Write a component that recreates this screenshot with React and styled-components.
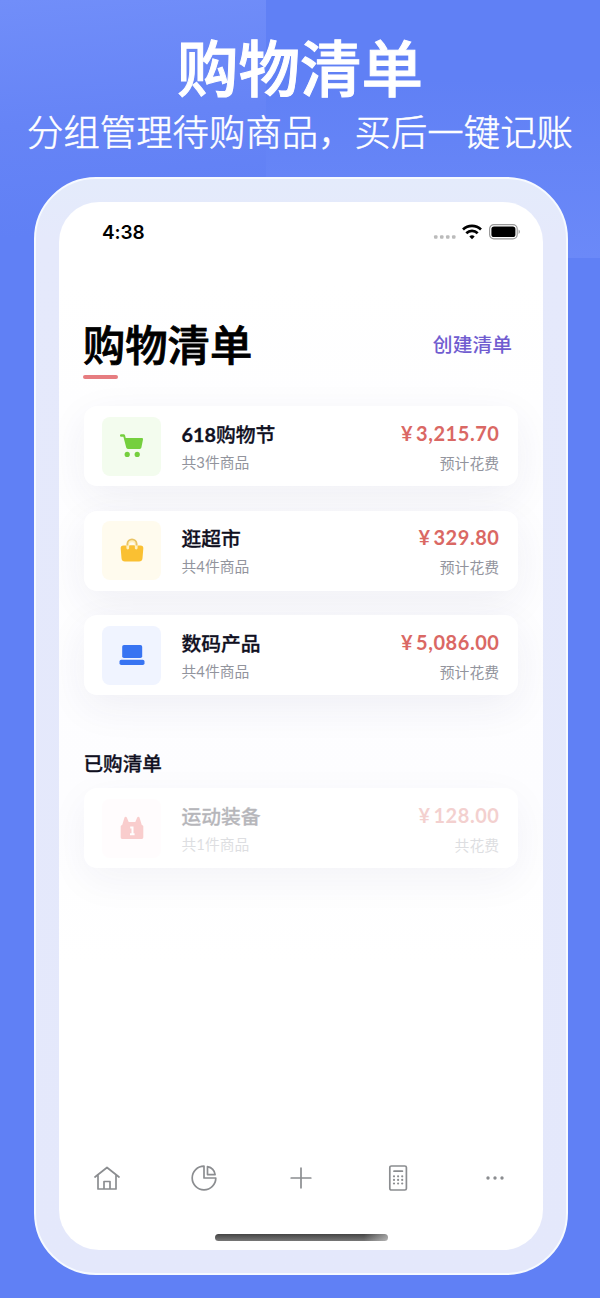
import React from 'react';
import styled, { createGlobalStyle } from 'styled-components';

const GlobalStyle = createGlobalStyle`
  *, *::before, *::after { box-sizing: border-box; }
  body {
    margin: 0;
    background: #6080f5;
    font-family: "Noto Sans CJK SC", "Noto Sans", sans-serif;
  }
`;

const Poster = styled.main`
  width: 600px;
  height: 1298px;
  overflow: hidden;
  display: flex;
  flex-direction: column;
  align-items: center;
  color: #fff;
  background:
    linear-gradient(175deg, #718ef9 0%, #6684f6 45%, rgba(96, 128, 245, 0) 85%) 0 0 / 266px 258px no-repeat,
    linear-gradient(180deg, rgba(112, 141, 249, 0) 30%, #6b89f8 100%) 100% 0 / 334px 258px no-repeat,
    #6080f5;
`;

const Headline = styled.h1`
  margin: 33px 0 0;
  height: 66px;
  line-height: 66px;
  font-size: 61.5px;
  font-weight: 500;
  -webkit-text-stroke: 1px #fff;
  white-space: nowrap;
`;

const Tagline = styled.p`
  margin: 6px 0 0;
  height: 50px;
  line-height: 50px;
  font-size: 36.4px;
  font-weight: 300;
  -webkit-text-stroke: 0.5px #fff;
  white-space: nowrap;
`;

const Phone = styled.section`
  width: 534px;
  height: 1098px;
  margin: 22px 0 0 2px;
  padding: 23px;
  flex: none;
  border: 2px solid #f6faff;
  border-radius: 62px;
  background: linear-gradient(180deg, #e4ebfb 0, #e5e9fb 60px, #e4e8fb 100%);
`;

const Screen = styled.div`
  height: 100%;
  overflow: hidden;
  display: flex;
  flex-direction: column;
  border-radius: 40px;
  background: linear-gradient(180deg, #fff 0, #fff 80px, #fefeff 200px, #fdfdff 600px, #fff 760px);
  color: #10101f;
`;

const StatusBar = styled.header`
  flex: none;
  height: 60px;
  padding: 0 22px 0 43px;
  display: flex;
  align-items: center;
  justify-content: space-between;
`;

const Clock = styled.time`
  margin-top: 2px;
  font: 600 19px/24px Inter, sans-serif;
  letter-spacing: -0.1px;
  color: #000;
`;

const StatusIcons = styled.div`
  display: flex;
  align-items: center;
  svg { display: block; }
`;

const TitleRow = styled.div`
  flex: none;
  margin: 56px 31px 0 24px;
  height: 50px;
  display: flex;
  align-items: center;
  justify-content: space-between;
`;

const PageTitle = styled.h2`
  margin: 0;
  font-size: 42.3px;
  line-height: 50px;
  font-weight: 500;
  -webkit-text-stroke: 0.8px #000;
  color: #000;
`;

const CreateLink = styled.button`
  margin-top: 2px;
  padding: 0;
  border: 0;
  background: none;
  font: inherit;
  font-size: 19.8px;
  line-height: 28px;
  font-weight: 500;
  color: #705cd0;
`;

const Underline = styled.div`
  flex: none;
  width: 35px;
  height: 4px;
  margin: 7px 0 0 24px;
  border-radius: 2px;
  background: #e67c80;
`;

const CardList = styled.div`
  flex: none;
  display: flex;
  flex-direction: column;
  gap: 24.5px;
  margin: ${p => p.$top}px 25px 0;
`;

const Card = styled.article`
  height: 80px;
  padding: 0 19px 0 18px;
  display: flex;
  align-items: center;
  border-radius: 13px;
  background: #fff;
  box-shadow: 0 12px 40px rgba(40, 40, 100, ${p => (p.$faded ? 0.05 : 0.065)});
`;

const IconTile = styled.div`
  width: 59px;
  height: 59px;
  margin-right: 20.5px;
  opacity: ${p => (p.$faded ? 0.3 : 1)};
  display: grid;
  place-items: center;
  border-radius: 8px;
  background: ${p => p.$bg};
`;

const Info = styled.div`
  flex: 1;
  display: flex;
  flex-direction: column;
  align-items: ${p => (p.$end ? 'flex-end' : 'flex-start')};
  opacity: ${p => (p.$faded ? 0.3 : 1)};
`;

const ItemName = styled.h3`
  margin: 0;
  font: 500 19.8px/28px "Noto Sans CJK SC", sans-serif;
  -webkit-text-stroke: 0.3px #10101f;
  color: #10101f;
`;

const Digits = styled.span`
  font-family: Lato, sans-serif;
  font-weight: 700;
`;

const Note = styled.span`
  margin-top: ${p => p.$gap}px;
  font: 400 14.8px/22px Lato, "Noto Sans CJK SC", sans-serif;
  color: #92949d;
`;

const Price = styled.strong`
  font: 700 20px/28px Lato, "Noto Sans CJK SC", sans-serif;
  letter-spacing: 0.55px;
  word-spacing: -2.6px;
  margin-right: -0.5px;
  color: #da6864;
`;

const SectionTitle = styled.h3`
  flex: none;
  margin: 54px 0 0 24.5px;
  font-size: 19.6px;
  line-height: 28px;
  font-weight: 500;
  -webkit-text-stroke: 0.3px #10101f;
`;

const TabBar = styled.nav`
  flex: none;
  margin-top: auto;
  height: 40px;
  display: grid;
  grid-template-columns: repeat(5, 1fr);
  place-items: center;
  svg { display: block; }
`;

const HomeIndicator = styled.div`
  flex: none;
  width: 173px;
  height: 7px;
  margin: 36px auto 9px 155.5px;
  border-radius: 4px;
  background:
    linear-gradient(90deg, rgba(255, 255, 255, 0) 86%, rgba(255, 255, 255, 0.45) 100%),
    linear-gradient(180deg, #444 0%, #777 100%);
`;

const CartIcon = () => (
  <svg width="26" height="26" viewBox="0 0 26 26" fill="#75cf3e">
    <path d="M2.2 1.200h2.100c.9 0 1.600.5 1.800 1.400l.6 2.400h16.100c.9 0 1.400.7 1.200 1.500l-1.600 8c-.2.9-.8 1.400-1.700 1.400H9c-.9 0-1.600-.5-1.800-1.400L4.400 3.700H2.200a1.250 1.250 0 0 1 0-2.500z" />
    <circle cx="8.200" cy="21.400" r="2.600" />
    <circle cx="18.200" cy="21.400" r="2.600" />
  </svg>
);

const BagIcon = () => (
  <svg width="26" height="26" viewBox="0 0 26 26">
    <path d="M4.500 7.500h17c2 0 3 1.200 2.800 3l-.8 9.700c-.2 2.200-1.400 3.300-3.400 3.300H5.900c-2 0-3.200-1.100-3.400-3.300l-.8-9.700c-.2-1.800.8-3 2.800-3z" fill="#fac032" />
    <path d="M8.800 10V7a4.200 4.200 0 0 1 8.400 0v3" fill="none" stroke="#fff0bd" strokeWidth="2.800" strokeLinecap="round" />
    <path d="M8.400 7.500V6a4.600 4.600 0 0 1 9.200 0v1.500" fill="none" stroke="#e9c364" strokeWidth="1.800" />
    <path d="M10.600 7.500h4.800V10h-4.800z" fill="#fac032" />
  </svg>
);

const LaptopIcon = () => (
  <svg width="26" height="26" viewBox="0 0 26 26" fill="#3874f2">
    <rect x="3.200" y="3" width="20" height="13" rx="1.800" />
    <rect x=".5" y="17.800" width="25" height="5.200" rx="1.800" />
  </svg>
);

const CalendarIcon = () => (
  <svg width="26" height="26" viewBox="0 0 26 26">
    <path d="M3.200 10 5.500 2.600c.4-1.300 1.900-1.300 2.300 0L9.700 7h6.600l1.900-4.400c.4-1.300 1.900-1.300 2.300 0l2.300 7.400c1 .1 1.500.7 1.500 1.500v10.500c0 1.400-.7 2-2 2H3.700c-1.300 0-2-.6-2-2V11.500c0-.8.5-1.400 1.500-1.500z" fill="#ed5c5c" />
    <path d="M11.200 12.500h2.300v6.800M11 19.300h4.600" fill="none" stroke="#fff" strokeWidth="2" />
  </svg>
);

const SignalIcon = () => (
  <svg width="23" height="20" viewBox="0 0 23 20" fill="#bbb">
    {[1, 7, 13, 19].map(x => <rect key={x} x={x} y="13.300" width="3.500" height="3.500" rx="1" />)}
  </svg>
);

const WifiIcon = styled(({ className }) => (
  <svg className={className} width="20" height="16" viewBox="0 0 20 16" fill="none" stroke="#000" strokeWidth="2.700">
    <path d="M1 5.500a13 13 0 0 1 18 0M4.300 9.200a8.200 8.200 0 0 1 11.400 0" />
    <path d="M10 15.200 7.300 12.500a3.900 3.900 0 0 1 5.400 0z" fill="#000" stroke="none" />
  </svg>
))`
  margin-left: 6px;
`;

const BatteryIcon = styled(({ className }) => (
  <svg className={className} width="32" height="16" viewBox="0 0 32 16">
    <rect x=".6" y=".6" width="27.600" height="14.300" rx="4.300" fill="none" stroke="#999" strokeWidth="1.200" />
    <rect x="2.400" y="2.400" width="24" height="10.700" rx="2.600" fill="#000" />
    <path d="M29.600 5.500c1.700.7 1.700 3.800 0 4.500z" fill="#999" />
  </svg>
))`
  margin-left: 7px;
`;

const TabIcon = ({ children }) => (
  <svg width="28" height="28" viewBox="0 0 28 28" fill="none" stroke="#8b8d90" strokeWidth="1.700" strokeLinejoin="round" strokeLinecap="round">
    {children}
  </svg>
);

const LISTS = [
  { digits: '618', name: '购物节', note: '共3件商品', price: '3,215.70', label: '预计花费', Icon: CartIcon, bg: '#f3fcee' },
  { name: '逛超市', note: '共4件商品', price: '329.80', label: '预计花费', Icon: BagIcon, bg: '#fffbee' },
  { name: '数码产品', note: '共4件商品', price: '5,086.00', label: '预计花费', Icon: LaptopIcon, bg: '#f0f4ff' },
];

const DONE = { name: '运动装备', note: '共1件商品', price: '128.00', label: '共花费', Icon: CalendarIcon, bg: '#fff8f9', faded: true };

function ListCard({ digits, name, note, price, label, Icon, bg, faded }) {
  return (
    <Card $faded={faded}>
      <IconTile $bg={bg} $faded={faded}><Icon /></IconTile>
      <Info $faded={faded}>
        <ItemName>{digits && <Digits>{digits}</Digits>}{name}</ItemName>
        <Note $gap={3}>{note}</Note>
      </Info>
      <Info $end $faded={faded}>
        <Price>¥ {price}</Price>
        <Note $gap={5}>{label}</Note>
      </Info>
    </Card>
  );
}

export default function App() {
  return (
    <Poster>
      <GlobalStyle />
      <Headline>购物清单</Headline>
      <Tagline>分组管理待购商品，买后一键记账</Tagline>
      <Phone>
        <Screen>
          <StatusBar>
            <Clock>4:38</Clock>
            <StatusIcons><SignalIcon /><WifiIcon /><BatteryIcon /></StatusIcons>
          </StatusBar>
          <TitleRow>
            <PageTitle>购物清单</PageTitle>
            <CreateLink>创建清单</CreateLink>
          </TitleRow>
          <Underline />
          <CardList $top={27}>
            {LISTS.map(item => <ListCard key={item.name} {...item} />)}
          </CardList>
          <SectionTitle>已购清单</SectionTitle>
          <CardList $top={11}>
            <ListCard {...DONE} />
          </CardList>
          <TabBar>
            <TabIcon>
              <path d="M2 13 14 3.500 26 13M5 11v14h18V11M11 25v-7.500h6V25" />
            </TabIcon>
            <TabIcon>
              <path d="M14 2.200A11.800 11.800 0 1 0 25.800 14H14z" />
              <path d="M17.500 2.600a9.500 9.500 0 0 1 7.600 8h-7.600z" />
            </TabIcon>
            <TabIcon><path d="M14 4.200v19.600M4.200 14h19.600" /></TabIcon>
            <TabIcon>
              <rect x="5.800" y="2" width="16.600" height="24" rx="1.600" />
              <path d="M10 7.200h8.400" />
              {[12.300, 15.900, 19.500].map(y => [10, 14.100, 18.200].map(x => (
                <circle key={`${x}-${y}`} cx={x} cy={y} r="1.100" fill="#8b8d90" stroke="none" />
              )))}
            </TabIcon>
            <TabIcon>
              {[7, 14, 21].map(x => <circle key={x} cx={x} cy="14" r="1.700" fill="#8b8d90" stroke="none" />)}
            </TabIcon>
          </TabBar>
          <HomeIndicator />
        </Screen>
      </Phone>
    </Poster>
  );
}
